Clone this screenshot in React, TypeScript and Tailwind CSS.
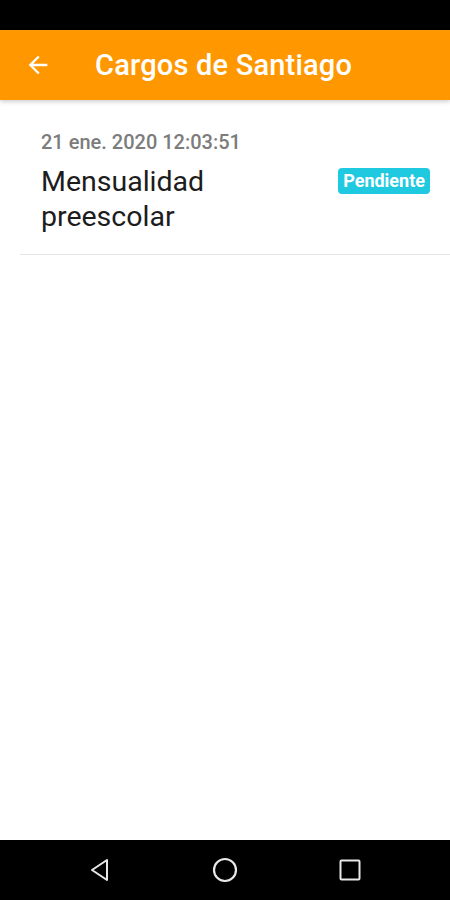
import React from 'react';

const App: React.FC = () => {
  return (
    <div className="w-[450px] h-[900px] flex flex-col bg-white font-['Roboto',sans-serif]">
      {/* Status bar */}
      <div className="h-[30px] bg-black shrink-0"></div>

      {/* Toolbar */}
      <div className="h-[70px] bg-[#ff9800] flex items-center shrink-0 shadow-[0_2px_4px_rgba(0,0,0,0.18)] relative z-10">
        <svg className="ml-[24px] w-[28px] h-[28px]" viewBox="0 0 24 24" fill="white">
          <path d="M20 11H7.83l5.59-5.59L12 4l-8 8 8 8 1.41-1.41L7.83 13H20v-2z" />
        </svg>
        <h1 className="ml-[43px] text-white text-[29px] font-medium leading-none tracking-[0.2px]">Cargos de Santiago</h1>
      </div>

      {/* List */}
      <div className="flex-1">
        <div className="pl-[20px]">
          <div className="flex pt-[29px] pb-[20px] border-b border-[#e6e6e6]">
            <div className="flex-1 pl-[21px]">
              <div className="text-[20px] leading-[26px] font-medium text-[#7c7c7c]">21 ene. 2020 12:03:51</div>
              <div className="mt-[9px] text-[28.5px] leading-[35px] text-[#1c1c1c] w-[240px]">Mensualidad preescolar</div>
            </div>
            <div className="pr-[20px] pt-[39px]">
              <span className="block bg-[#1fc9e0] text-white text-[18px] font-bold leading-[26px] px-[5px] rounded-[4px]">Pendiente</span>
            </div>
          </div>
        </div>
      </div>

      {/* Nav bar */}
      <div className="h-[60px] bg-black flex items-center justify-center gap-[85px] shrink-0">
        <div className="w-[40px] flex justify-center">
          <svg width="24" height="24" viewBox="0 0 24 24" fill="none" stroke="#e8e8e8" strokeWidth="2" strokeLinejoin="round">
            <path d="M19 2 L4 12 L19 22 Z" />
          </svg>
        </div>
        <div className="w-[40px] flex justify-center">
          <svg width="26" height="26" viewBox="0 0 26 26" fill="none" stroke="#e8e8e8" strokeWidth="2.2">
            <circle cx="13" cy="13" r="11" />
          </svg>
        </div>
        <div className="w-[40px] flex justify-center">
          <svg width="22" height="22" viewBox="0 0 22 22" fill="none" stroke="#e8e8e8" strokeWidth="2">
            <rect x="1.5" y="1.5" width="19" height="19" rx="1" />
          </svg>
        </div>
      </div>
    </div>
  );
};

export default App;
